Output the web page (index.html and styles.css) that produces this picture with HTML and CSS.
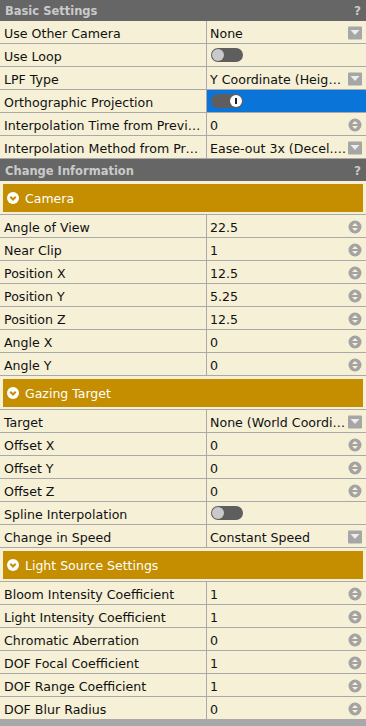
FILE: index.html
```html
<!DOCTYPE html>
<html lang="en">
<head>
    <meta charset="UTF-8">
    <meta name="viewport" content="width=device-width, initial-scale=1.0">
    <title>Camera Settings</title>
    <link rel="stylesheet" href="styles.css">
</head>
<body>
    <svg class="defs" width="0" height="0">
        <defs>
            <symbol id="drop" viewBox="0 0 14 13">
                <rect x="0" y="0" width="14" height="13" rx="1" fill="#a6a6a6"/>
                <path d="M2.5 3.5 H11.5 L7 8.5 Z" fill="#ececec"/>
            </symbol>
            <symbol id="spin" viewBox="0 0 14 14">
                <circle cx="7" cy="7" r="6.5" fill="#a3a3a3"/>
                <path d="M4 6 L7 3 L10 6 Z" fill="#f5f0d6"/>
                <path d="M4 8 L7 11 L10 8 Z" fill="#f5f0d6"/>
            </symbol>
            <symbol id="chev" viewBox="0 0 12 12">
                <circle cx="6" cy="6" r="6" fill="#ffffff"/>
                <path d="M3.3 4.8 L6 7.5 L8.7 4.8" fill="none" stroke="#c48e00" stroke-width="2"/>
            </symbol>
        </defs>
    </svg>

    <div class="panel">
        <div class="head">Basic Settings<span class="help">?</span></div>

        <div class="row"><div class="label">Use Other Camera</div><div class="value"><span class="text">None</span><svg class="icon"><use href="#drop"/></svg></div></div>
        <div class="row"><div class="label">Use Loop</div><div class="value"><span class="toggle"><span class="knob"></span></span></div></div>
        <div class="row"><div class="label">LPF Type</div><div class="value"><span class="text">Y Coordinate (Height Based)</span><svg class="icon"><use href="#drop"/></svg></div></div>
        <div class="row"><div class="label">Orthographic Projection</div><div class="value selected"><span class="toggle on"><span class="knob"></span></span></div></div>
        <div class="row"><div class="label">Interpolation Time from Previous Camera</div><div class="value"><span class="text">0</span><svg class="icon"><use href="#spin"/></svg></div></div>
        <div class="row"><div class="label">Interpolation Method from Previous Camera</div><div class="value"><span class="text">Ease-out 3x (Decel.,,Fast)</span><svg class="icon"><use href="#drop"/></svg></div></div>

        <div class="head second">Change Information<span class="help">?</span></div>

        <div class="band"><div class="band-inner"><svg class="chev"><use href="#chev"/></svg>Camera</div></div>
        <div class="row"><div class="label">Angle of View</div><div class="value"><span class="text">22.5</span><svg class="icon"><use href="#spin"/></svg></div></div>
        <div class="row"><div class="label">Near Clip</div><div class="value"><span class="text">1</span><svg class="icon"><use href="#spin"/></svg></div></div>
        <div class="row"><div class="label">Position X</div><div class="value"><span class="text">12.5</span><svg class="icon"><use href="#spin"/></svg></div></div>
        <div class="row"><div class="label">Position Y</div><div class="value"><span class="text">5.25</span><svg class="icon"><use href="#spin"/></svg></div></div>
        <div class="row"><div class="label">Position Z</div><div class="value"><span class="text">12.5</span><svg class="icon"><use href="#spin"/></svg></div></div>
        <div class="row"><div class="label">Angle X</div><div class="value"><span class="text">0</span><svg class="icon"><use href="#spin"/></svg></div></div>
        <div class="row"><div class="label">Angle Y</div><div class="value"><span class="text">0</span><svg class="icon"><use href="#spin"/></svg></div></div>

        <div class="band"><div class="band-inner"><svg class="chev"><use href="#chev"/></svg>Gazing Target</div></div>
        <div class="row"><div class="label">Target</div><div class="value"><span class="text">None (World Coordinates)</span><svg class="icon"><use href="#drop"/></svg></div></div>
        <div class="row"><div class="label">Offset X</div><div class="value"><span class="text">0</span><svg class="icon"><use href="#spin"/></svg></div></div>
        <div class="row"><div class="label">Offset Y</div><div class="value"><span class="text">0</span><svg class="icon"><use href="#spin"/></svg></div></div>
        <div class="row"><div class="label">Offset Z</div><div class="value"><span class="text">0</span><svg class="icon"><use href="#spin"/></svg></div></div>
        <div class="row"><div class="label">Spline Interpolation</div><div class="value"><span class="toggle"><span class="knob"></span></span></div></div>
        <div class="row"><div class="label">Change in Speed</div><div class="value"><span class="text">Constant Speed</span><svg class="icon"><use href="#drop"/></svg></div></div>

        <div class="band"><div class="band-inner"><svg class="chev"><use href="#chev"/></svg>Light Source Settings</div></div>
        <div class="row"><div class="label">Bloom Intensity Coefficient</div><div class="value"><span class="text">1</span><svg class="icon"><use href="#spin"/></svg></div></div>
        <div class="row"><div class="label">Light Intensity Coefficient</div><div class="value"><span class="text">1</span><svg class="icon"><use href="#spin"/></svg></div></div>
        <div class="row"><div class="label">Chromatic Aberration</div><div class="value"><span class="text">0</span><svg class="icon"><use href="#spin"/></svg></div></div>
        <div class="row"><div class="label">DOF Focal Coefficient</div><div class="value"><span class="text">1</span><svg class="icon"><use href="#spin"/></svg></div></div>
        <div class="row"><div class="label">DOF Range Coefficient</div><div class="value"><span class="text">1</span><svg class="icon"><use href="#spin"/></svg></div></div>
        <div class="row"><div class="label">DOF Blur Radius</div><div class="value"><span class="text">0</span><svg class="icon"><use href="#spin"/></svg></div></div>
    </div>
</body>
</html>
```

FILE: styles.css
```css
body {
    margin: 0;
    padding: 0;
    background-color: #a8a8a8;
    font-family: 'DejaVu Sans', sans-serif;
    font-size: 12.6px;
    color: #111;
}
.defs {
    position: absolute;
}
.panel {
    width: 366px;
    background-color: #f5f0d6;
}
.head {
    display: flex;
    justify-content: space-between;
    height: 19px;
    line-height: 19px;
    padding: 2px 5px 0 5px;
    background-color: #666666;
    color: #cacaca;
    font-size: 11.5px;
    font-weight: bold;
}
.head.second {
    height: 20px;
    line-height: 20px;
}
.help {
    font-size: 12px;
}
.row {
    display: grid;
    grid-template-columns: 207px 1fr;
    height: 22px;
    border-bottom: 1px solid #a9a9a9;
}
.label {
    padding: 4px 4px 0;
    line-height: 18px;
    border-right: 1px solid #a9a9a9;
    white-space: nowrap;
    overflow: hidden;
    text-overflow: ellipsis;
}
.value {
    display: flex;
    align-items: center;
    gap: 2px;
    padding: 0 4px 0 3px;
    min-width: 0;
}
.value.selected {
    background-color: #0b74d9;
}
.text {
    flex: 1;
    padding-top: 4px;
    line-height: 18px;
    white-space: nowrap;
    overflow: hidden;
    text-overflow: ellipsis;
}
.icon {
    width: 14px;
    height: 14px;
    margin-top: 2px;
    flex-shrink: 0;
}
.toggle {
    display: flex;
    align-items: center;
    width: 32px;
    height: 14px;
    margin-left: 1px;
    border-radius: 7px;
    background-color: #5e5e5e;
}
.knob {
    width: 12px;
    height: 12px;
    margin-left: 1px;
    border-radius: 50%;
    background-color: #c9c9c9;
}
.toggle.on .knob {
    position: relative;
    margin-left: 19px;
    background-color: #ffffff;
}
.toggle.on .knob::after {
    content: "";
    position: absolute;
    left: 5px;
    top: 3px;
    width: 2px;
    height: 6px;
    background-color: #222;
}
.band {
    height: 28px;
    padding: 3px 3px 2px;
    border-bottom: 1px solid #a9a9a9;
}
.band-inner {
    display: flex;
    align-items: center;
    gap: 6px;
    height: 28px;
    padding-left: 4px;
    background-color: #c48e00;
    color: #ffffff;
    font-size: 12.5px;
}
.chev {
    width: 12px;
    height: 12px;
}
```
